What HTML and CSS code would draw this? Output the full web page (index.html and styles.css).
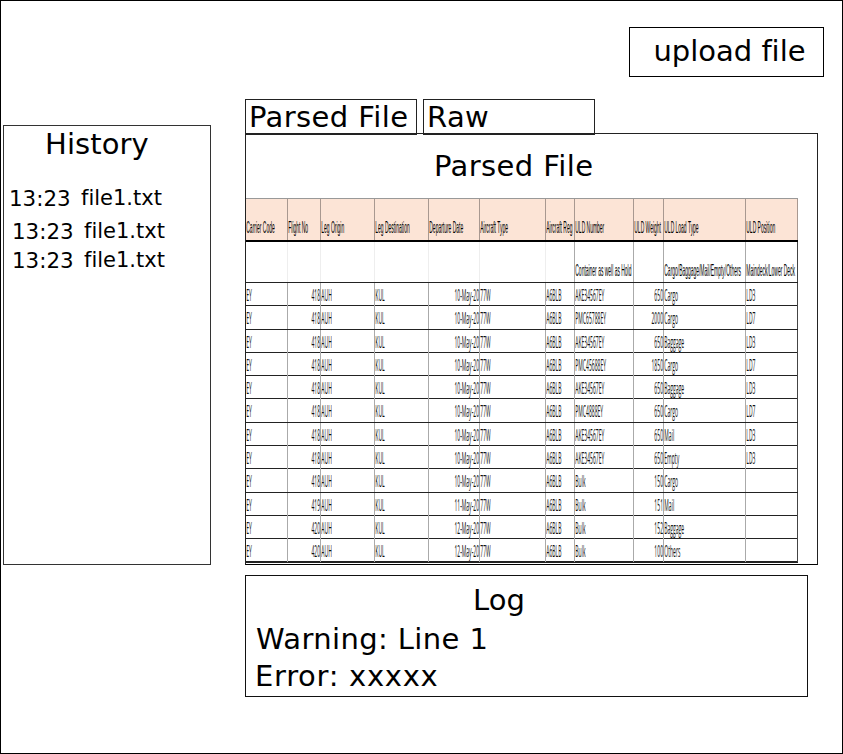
FILE: index.html
```
<!DOCTYPE html>
<html lang="en">
<head>
<meta charset="utf-8">
<title>Parsed File</title>
<link rel="stylesheet" href="styles.css">
</head>
<body>
<div class="page">
  <header class="top"><button class="upload">upload file</button></header>
  <div class="layout">
    <aside class="history">
      <h2>History</h2>
      <ul>
        <li class="first"><span class="time">13:23</span><span class="name">file1.txt</span></li>
        <li class="second"><span class="time">13:23</span><span class="name">file1.txt</span></li>
        <li><span class="time">13:23</span><span class="name">file1.txt</span></li>
      </ul>
    </aside>
    <main>
      <nav class="tabs"><div class="tab">Parsed File</div><div class="tab">Raw</div></nav>
      <section class="panel">
        <h1>Parsed File</h1>
        <div class="sheet" id="sheet"></div>
      </section>
      <section class="log">
        <h2>Log</h2>
        <p class="warning">Warning: Line 1</p>
        <p class="error">Error: xxxxx</p>
      </section>
    </main>
  </div>
</div>
<script src="sheet.js"></script>
</body>
</html>
```
FILE: sheet.js
```
const head = ['Carrier Code', 'Flight No', 'Leg Origin', 'Leg Destination', 'Departure Date', 'Aircraft Type', 'Aircraft Reg', 'ULD Number', 'ULD Weight', 'ULD Load Type', 'ULD Position'];
const notes = ['', '', '', '', '', '', '', 'Container as well as Hold', '', 'Cargo/Baggage/Mail/Empty/Others', 'Maindeck/Lower Deck'];
const loads = [
  ['418', '10-May-20', 'AKE34567EY', '650', 'Cargo', 'LD3'],
  ['418', '10-May-20', 'PMC65788EY', '2000', 'Cargo', 'LD7'],
  ['418', '10-May-20', 'AKE34567EY', '650', 'Baggage', 'LD3'],
  ['418', '10-May-20', 'PMC45688EY', '1850', 'Cargo', 'LD7'],
  ['418', '10-May-20', 'AKE34567EY', '650', 'Baggage', 'LD3'],
  ['418', '10-May-20', 'PMC4888EY', '650', 'Cargo', 'LD7'],
  ['418', '10-May-20', 'AKE34567EY', '650', 'Mail', 'LD3'],
  ['418', '10-May-20', 'AKE34567EY', '650', 'Empty', 'LD3'],
  ['418', '10-May-20', 'Bulk', '150', 'Cargo', ''],
  ['419', '11-May-20', 'Bulk', '151', 'Mail', ''],
  ['420', '12-May-20', 'Bulk', '152', 'Baggage', ''],
  ['420', '12-May-20', 'Bulk', '100', 'Others', '']
];
const numeric = [1, 4, 8];

function addRow(kind, cells) {
  const row = document.createElement('div');
  row.className = 'row ' + kind;
  cells.forEach((text, i) => {
    const cell = document.createElement('div');
    cell.className = 'cell' + (kind === 'data' && numeric.includes(i) ? ' num' : '');
    const label = document.createElement('span');
    label.textContent = text;
    cell.append(label);
    row.append(cell);
  });
  document.getElementById('sheet').append(row);
}

addRow('head', head);
addRow('notes', notes);
loads.forEach(([flight, date, uld, weight, type, pos]) =>
  addRow('data', ['EY', flight, 'AUH', 'KUL', date, '77W', 'A6BLB', uld, weight, type, pos]));
```
FILE: styles.css
```
* { box-sizing: border-box; }
body { margin: 0; background: #fff; color: #000; font: 29px/34px "DejaVu Sans", Verdana, sans-serif; font-variant-ligatures: none; }
h1, h2, p, ul { margin: 0; padding: 0; font-size: inherit; font-weight: normal; }
ul { list-style: none; }

.page { width: 843px; height: 754px; border: 1px solid #000; overflow: hidden; }
.top { display: flex; justify-content: flex-end; padding: 26px 18px 0 0; }
.upload { width: 195px; height: 50px; padding: 0 0 3px 6px; border: 1px solid #000; background: #fff; color: #000; font: inherit; font-variant-ligatures: none; white-space: nowrap; }

.layout { display: flex; align-items: flex-start; gap: 34px; padding: 22px 0 0 2px; }
.history { width: 208px; height: 440px; margin-top: 26px; border: 1px solid #333; font-size: 21px; line-height: 24px; }
.history h2 { padding-left: 41px; font-size: 29px; line-height: 34px; margin-top: 1px; letter-spacing: .1px; }
.history ul { padding: 25px 0 0 8px; }
.history li { display: flex; height: 29px; }
.history .first { height: 33px; margin-left: -3px; }
.time { width: 72px; padding-top: 1px; font-size: 21.4px; }
.name { white-space: nowrap; }

main { width: 573px; }
.tabs { display: flex; gap: 6px; height: 34px; }
.tab { width: 172px; height: 36px; border: 1px solid #222; padding-left: 3px; letter-spacing: .4px; white-space: nowrap; }
.panel { width: 573px; height: 432px; border: 1px solid #222; border-bottom: 1px solid #000; }
.panel h1 { padding: 15px 0 0 188px; height: 64px; letter-spacing: .4px; }

.sheet { width: 552px; border-top: 1px solid #999; }
.row { display: grid; grid-template-columns: 42px 33px 54px 54px 51px 66px 29px 59px 30px 82px 52px; height: 23.3px; border-bottom: 1px solid #222; }
.cell { min-width: 0; border-right: 1px solid #aaa; }
.cell:last-child { border-right-color: #444; }
.cell span { display: block; width: 328%; padding: 1px 1px 0; transform: scaleX(.305); transform-origin: 0 0; font: 16.5px/22px "Open Sans", sans-serif; white-space: nowrap; color: #111; }
.cell.num span { text-align: right; padding-right: 0; }
.head { height: 43px; background: #fce4d6; border-bottom: 2px solid #000; }
.notes { height: 41px; }
.head .cell { border-color: #a89890; }
.head .cell span, .notes .cell span { width: 333%; padding: 20px 1px 0; transform: scaleX(.3); font: 16.5px/17px "Liberation Sans", sans-serif; color: #000; }
.notes .cell:nth-child(-n+6) { border-color: #eee; }
.row:last-child { border-bottom: 2px solid #222; }

.log { width: 563px; height: 122px; margin-top: 10px; border: 1px solid #111; }
.log h2 { padding: 7px 0 0 227px; }
.log p { padding-left: 10px; }
.log .warning { margin-top: 5px; letter-spacing: .4px; }
.log .error { margin-top: 3px; padding-left: 9px; letter-spacing: .7px; }
```
